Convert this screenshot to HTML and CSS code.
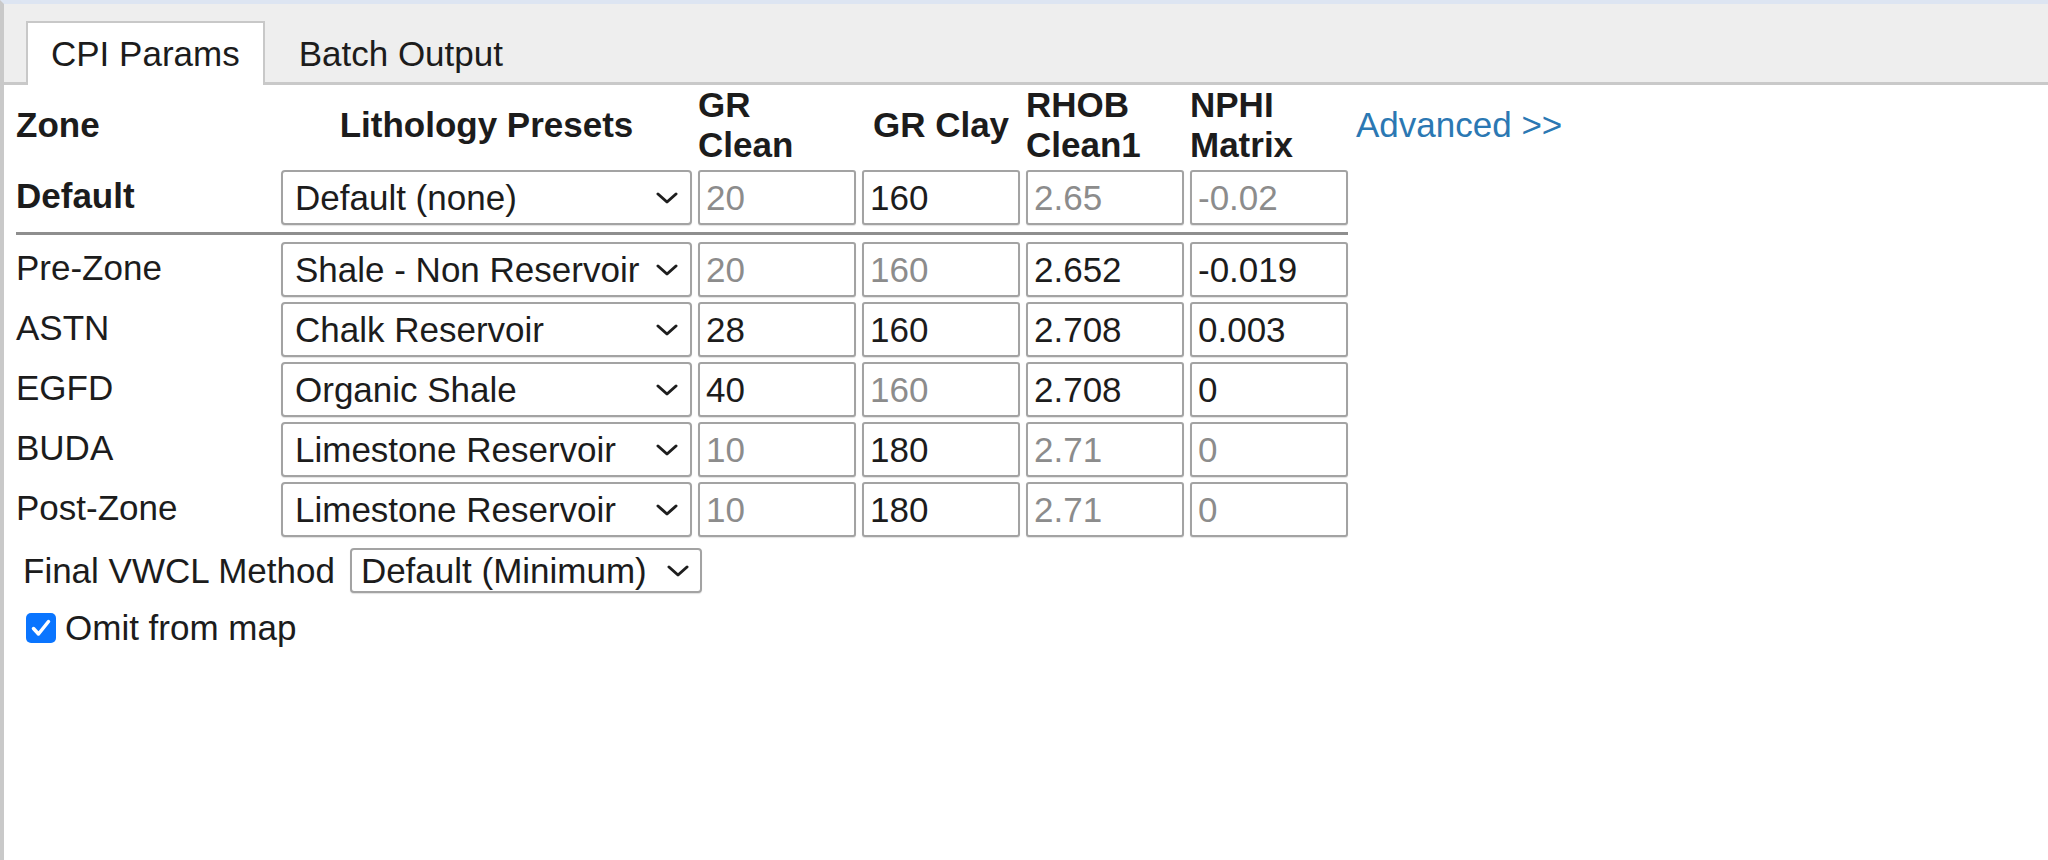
FILE: index.html
```html
<!DOCTYPE html>
<html>
<head>
<meta charset="utf-8">
<link rel="stylesheet" href="styles.css">
</head>
<body>
<div class="tabbar">
  <div class="tab active">CPI Params</div>
  <div class="tab">Batch Output</div>
</div>
<div class="panel">
  <div class="grid">
    <div class="th th-zone">Zone</div>
    <div class="th th-center">Lithology Presets</div>
    <div class="th">GR<br>Clean</div>
    <div class="th th-center">GR Clay</div>
    <div class="th">RHOB<br>Clean1</div>
    <div class="th">NPHI<br>Matrix</div>
    <a class="adv" href="#">Advanced &gt;&gt;</a>

    <div class="label bold">Default</div>
    <div class="select"><span>Default (none)</span><svg class="chev" viewBox="0 0 22 12"><path d="M2 2 L11 10 L20 2"/></svg></div>
    <input class="num" placeholder="20">
    <input class="num" value="160">
    <input class="num" placeholder="2.65">
    <input class="num" placeholder="-0.02">

    <div class="sep"></div>

    <div class="label">Pre-Zone</div>
    <div class="select"><span>Shale - Non Reservoir</span><svg class="chev" viewBox="0 0 22 12"><path d="M2 2 L11 10 L20 2"/></svg></div>
    <input class="num" placeholder="20">
    <input class="num" placeholder="160">
    <input class="num" value="2.652">
    <input class="num" value="-0.019">

    <div class="label">ASTN</div>
    <div class="select"><span>Chalk Reservoir</span><svg class="chev" viewBox="0 0 22 12"><path d="M2 2 L11 10 L20 2"/></svg></div>
    <input class="num" value="28">
    <input class="num" value="160">
    <input class="num" value="2.708">
    <input class="num" value="0.003">

    <div class="label">EGFD</div>
    <div class="select"><span>Organic Shale</span><svg class="chev" viewBox="0 0 22 12"><path d="M2 2 L11 10 L20 2"/></svg></div>
    <input class="num" value="40">
    <input class="num" placeholder="160">
    <input class="num" value="2.708">
    <input class="num" value="0">

    <div class="label">BUDA</div>
    <div class="select"><span>Limestone Reservoir</span><svg class="chev" viewBox="0 0 22 12"><path d="M2 2 L11 10 L20 2"/></svg></div>
    <input class="num" placeholder="10">
    <input class="num" value="180">
    <input class="num" placeholder="2.71">
    <input class="num" placeholder="0">

    <div class="label">Post-Zone</div>
    <div class="select"><span>Limestone Reservoir</span><svg class="chev" viewBox="0 0 22 12"><path d="M2 2 L11 10 L20 2"/></svg></div>
    <input class="num" placeholder="10">
    <input class="num" value="180">
    <input class="num" placeholder="2.71">
    <input class="num" placeholder="0">
  </div>

  <div class="final-row">
    <span class="final-label">Final VWCL Method</span>
    <div class="select small"><span>Default (Minimum)</span><svg class="chev" viewBox="0 0 22 12"><path d="M2 2 L11 10 L20 2"/></svg></div>
  </div>

  <div class="check-row">
    <span class="checkbox"><svg viewBox="0 0 30 30"><path d="M7.5 15.5 L12.5 21 L22.5 8.5"/></svg></span>
    <span class="check-label">Omit from map</span>
  </div>
</div>
</body>
</html>
```

FILE: styles.css
```css
html, body {
  margin: 0;
  padding: 0;
  height: 100%;
}

body {
  box-sizing: border-box;
  border-top: 4px solid #dde5f2;
  border-left: 4px solid #c9c9c9;
  font-family: "Liberation Sans", Arial, sans-serif;
  font-size: 35px;
  color: #1c1c1c;
  background: #ffffff;
}

.tabbar {
  height: 78px;
  background: #eeeeee;
  border-bottom: 3px solid #c9c9c9;
  display: flex;
  align-items: flex-end;
  padding-left: 22px;
}

.tab {
  box-sizing: border-box;
  height: 64px;
  margin-bottom: -3px;
  margin-right: 9px;
  padding: 0 23px;
  display: flex;
  align-items: center;
  border: 2px solid transparent;
  border-bottom: 0;
}

.tab.active {
  background: #ffffff;
  border-color: #c8c8c8;
}

.panel {
  padding-left: 12px;
}

.grid {
  display: grid;
  grid-template-columns: 259px 411px 158px 158px 158px 158px auto;
  column-gap: 6px;
  row-gap: 5px;
  align-items: center;
  margin-top: 0;
}

.th {
  font-weight: bold;
  line-height: 40px;
  text-align: left;
}

.th-center {
  text-align: center;
}

.adv {
  color: #2b78b3;
  text-decoration: none;
  margin-left: 2px;
  white-space: nowrap;
}

.label {
  grid-column: 1;
  margin-top: -3px;
}

.bold {
  font-weight: bold;
}

.select {
  box-sizing: border-box;
  height: 55px;
  border: 2px solid #a3a3a3;
  border-radius: 4px;
  box-shadow: 0 1px 1px rgba(0,0,0,0.12);
  display: flex;
  align-items: center;
  justify-content: space-between;
  padding: 0 12px 0 12px;
  background: #ffffff;
  white-space: nowrap;
}

.chev {
  width: 22px;
  height: 12px;
  flex: none;
}

.chev path {
  fill: none;
  stroke: #1e1e1e;
  stroke-width: 3;
  stroke-linecap: round;
  stroke-linejoin: round;
}

.num {
  box-sizing: border-box;
  width: 158px;
  height: 55px;
  border: 2px solid #a3a3a3;
  border-radius: 3px;
  box-shadow: 0 1px 1px rgba(0,0,0,0.12);
  padding: 0 0 0 6px;
  margin: 0;
  font-family: "Liberation Sans", Arial, sans-serif;
  font-size: 35px;
  color: #1c1c1c;
  background: #ffffff;
  outline: none;
}

.num::placeholder {
  color: #8c8c8c;
  opacity: 1;
}

.sep {
  grid-column: 1 / 7;
  height: 3px;
  background: #8e8e8e;
  margin: 2px 0;
}

.final-row {
  display: flex;
  align-items: center;
  margin-top: 11px;
  padding-left: 7px;
}

.final-label {
  margin-right: 15px;
}

.select.small {
  width: 352px;
  height: 45px;
  padding: 0 11px 0 9px;
}

.check-row {
  display: flex;
  align-items: center;
  margin-top: 15px;
  padding-left: 10px;
}

.checkbox {
  width: 30px;
  height: 30px;
  border-radius: 5px;
  background: #0a75ff;
  display: flex;
  align-items: center;
  justify-content: center;
  flex: none;
}

.checkbox svg {
  width: 30px;
  height: 30px;
}

.checkbox path {
  fill: none;
  stroke: #ffffff;
  stroke-width: 3.5;
  stroke-linecap: round;
  stroke-linejoin: round;
}

.check-label {
  margin-left: 9px;
}
```
